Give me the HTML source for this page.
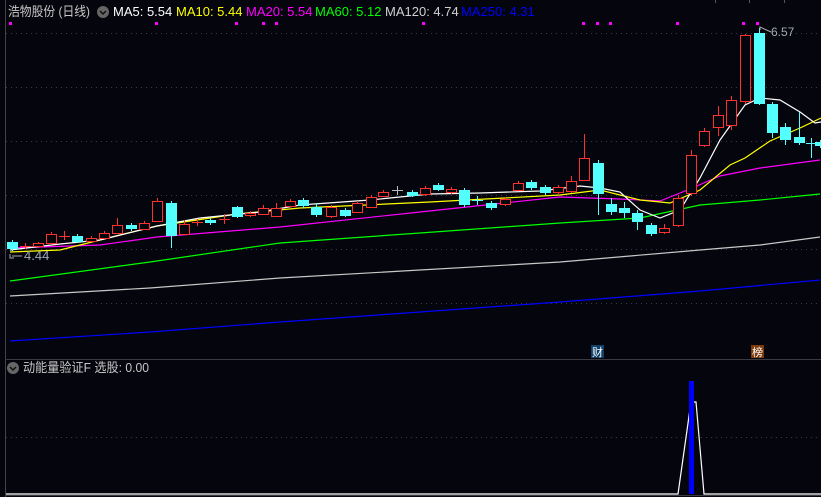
<!DOCTYPE html>
<html><head><meta charset="utf-8"><style>
html,body{margin:0;padding:0;background:#05050d;width:821px;height:497px;overflow:hidden}
svg{display:block}
text{font-family:"Liberation Sans","Noto Sans CJK SC",sans-serif}
</style></head><body>
<svg id="s" width="821" height="497" xmlns="http://www.w3.org/2000/svg">
<rect width="821" height="497" fill="#05050d"/>
<line x1="5.5" y1="0" x2="5.5" y2="497" stroke="#444" stroke-width="1"/>
<g stroke="#3a3a44" stroke-dasharray="1,4" stroke-width="1">
<line x1="6" y1="33.5" x2="821" y2="33.5"/><line x1="6" y1="87.5" x2="821" y2="87.5"/>
<line x1="6" y1="141.5" x2="821" y2="141.5"/><line x1="6" y1="195.5" x2="821" y2="195.5"/>
<line x1="6" y1="249.5" x2="821" y2="249.5"/><line x1="6" y1="303.5" x2="821" y2="303.5"/>
<line x1="6" y1="437.5" x2="821" y2="437.5"/>
</g>
<g stroke="#555" stroke-width="1"><line x1="715.5" y1="0" x2="715.5" y2="3"/><line x1="749.5" y1="0" x2="749.5" y2="3"/><line x1="784.5" y1="0" x2="784.5" y2="3"/></g>
<line x1="5" y1="359.5" x2="821" y2="359.5" stroke="#3a3a40" stroke-width="1"/>
<line x1="5" y1="495.5" x2="821" y2="495.5" stroke="#3a3a40" stroke-width="1"/>
<g fill="#ff00ff">
<rect x="9" y="22" width="3" height="3"/><rect x="155" y="22" width="3" height="3"/><rect x="235" y="22" width="3" height="3"/><rect x="262" y="22" width="3" height="3"/><rect x="275" y="22" width="3" height="3"/><rect x="422" y="22" width="3" height="3"/><rect x="582" y="22" width="3" height="3"/><rect x="596" y="22" width="3" height="3"/><rect x="609" y="22" width="3" height="3"/><rect x="676" y="22" width="3" height="3"/><rect x="742" y="22" width="3" height="3"/><rect x="756" y="22" width="3" height="3"/>
</g>
<g fill="none" stroke-width="1.2">
<polyline stroke="#0000ff" points="10,341 150,332 280,322 420,312 560,302 700,291 820,280"/>
<polyline stroke="#c8c8c8" points="10,296 150,288 280,278 420,270 560,262 700,250 760,245 820,237"/>
<polyline stroke="#00ff00" points="10,281 150,262 280,243 420,233 560,223 640,218 700,205 760,200 820,194"/>
<polyline stroke="#ff00ff" points="10,248 100,245 157,237 280,227 420,212 560,197 620,199 660,201 690,189 720,176 760,168 820,160"/>
<polyline stroke="#ffff00" points="10,252 60,250 120,235 157,226 237,214 300,208 430,202 560,195 600,190 640,200 670,203 700,190 730,165 745,158 770,141 800,128 821,118"/>
<polyline stroke="#ffffff" points="10,250 60,244 100,240 157,226 200,218 260,212 300,205 370,200 430,194 480,193 540,191 580,186 600,188 620,192 640,210 660,218 680,210 700,178 720,140 745,105 760,98 780,100 800,112 815,123 821,122"/>
</g>
<g id="c"></g>
<polyline points="10,254 10,258 14,258" fill="none" stroke="#aaa"/>
<line x1="12" y1="256" x2="22" y2="256" stroke="#aaa"/>
<text x="24" y="260" font-size="13" fill="#a0a8b8">4.44</text>
<polyline points="760,30 760,27 771,32" fill="none" stroke="#aaa"/>
<text x="771" y="36" font-size="12" fill="#a0a8b8">6.57</text>
<rect x="591" y="345" width="13" height="13" fill="#10406a"/>
<text x="592" y="356" font-size="11" fill="#fff">财</text>
<rect x="751" y="345" width="13" height="13" fill="#7a3a0a"/>
<text x="752" y="356" font-size="11" fill="#fff">榜</text>
<polyline points="6,494 678,494 691,402 696,402 704,494 821,494" fill="none" stroke="#fff" stroke-width="1.2"/>
<rect x="689" y="381" width="5" height="113" fill="#0000ff"/>
<text x="8" y="16" font-size="13" fill="#c8c8c8" textLength="82" lengthAdjust="spacingAndGlyphs">浩物股份 (日线)</text>
<circle cx="103" cy="12" r="6" fill="#666"/><polyline points="100,11 103,14 106,11" fill="none" stroke="#111" stroke-width="1.5"/>
<text y="16" font-size="13"><tspan x="113" fill="#fff">MA5: 5.54</tspan><tspan x="176" fill="#ffff00">MA10: 5.44</tspan><tspan x="246" fill="#ff00ff">MA20: 5.54</tspan><tspan x="315" fill="#00ff00">MA60: 5.12</tspan><tspan x="385" fill="#d0d0d0">MA120: 4.74</tspan><tspan x="461" fill="#0000ff">MA250: 4.31</tspan></text>
<circle cx="13" cy="368" r="6" fill="#666"/><polyline points="10,367 13,370 16,367" fill="none" stroke="#111" stroke-width="1.5"/>
<text x="23" y="372" font-size="13" fill="#c8c8c8" textLength="126" lengthAdjust="spacingAndGlyphs">动能量验证F 选股: 0.00</text>
</svg>
<script>
var d=[[12,242,249,240,251,'c'],[25,246,246,243,249,'x'],[38,246,243,242,247,'r'],[51,243,234,232,244,'r'],[64,236,236,231,240,'xr'],[77,236,242,234,243,'c'],[91,241,238,236,242,'r'],[104,238,233,231,239,'r'],[117,233,225,218,234,'r'],[131,225,229,223,231,'c'],[144,229,223,221,230,'r'],[157,221,201,198,222,'r'],[171,203,236,201,248,'c'],[184,234,224,220,235,'r'],[197,222,222,219,226,'xr'],[210,220,223,218,225,'c'],[224,219,219,214,224,'xr'],[237,207,217,206,218,'c'],[250,215,213,211,217,'r'],[263,214,208,205,215,'r'],[276,216,208,203,217,'r'],[290,206,201,199,207,'r'],[303,200,206,198,208,'c'],[316,207,215,203,217,'c'],[331,216,207,205,218,'r'],[345,210,216,208,217,'c'],[357,212,203,201,213,'r'],[371,207,197,195,208,'r'],[383,196,192,190,197,'r'],[397,190,190,186,195,'xg'],[412,192,196,190,197,'c'],[425,194,188,186,196,'r'],[438,185,190,183,191,'c'],[451,192,189,187,194,'r'],[464,190,205,188,207,'c'],[477,200,200,196,205,'xc'],[491,203,208,201,210,'c'],[505,204,199,197,206,'r'],[518,190,183,181,191,'r'],[531,182,188,180,190,'c'],[545,187,193,185,195,'c'],[558,192,187,185,194,'r'],[571,191,181,176,193,'r'],[584,180,158,134,181,'r'],[598,163,194,160,215,'c'],[611,204,212,198,215,'c'],[624,208,213,202,218,'c'],[637,213,222,210,230,'c'],[651,225,234,223,236,'c'],[664,232,228,224,234,'r'],[678,225,198,195,227,'r'],[691,193,155,150,196,'r'],[704,145,131,128,147,'r'],[718,127,115,106,136,'r'],[731,125,100,96,130,'r'],[745,101,35,34,104,'r'],[759,33,104,28,105,'c'],[772,104,133,102,138,'c'],[785,127,140,123,145,'c'],[799,137,143,112,145,'c'],[811,143,143,138,158,'xc'],[820,142,146,140,148,'c']];
var s='';d.forEach(function(a){var x=a[0],o=a[1],c=a[2],h=a[3],l=a[4],t=a[5];
var col=t=='c'||t=='xc'?'#54ffff':t=='xg'?'#bbb':'#ff3030';
s+='<line x1="'+(x+.5)+'" y1="'+h+'" x2="'+(x+.5)+'" y2="'+l+'" stroke="'+col+'"/>';
if(t[0]=='x'){s+='<line x1="'+(x-5)+'" y1="'+(o+.5)+'" x2="'+(x+6)+'" y2="'+(o+.5)+'" stroke="'+col+'"/>';}
else if(t=='c'){var y=Math.min(o,c);s+='<rect x="'+(x-5)+'" y="'+y+'" width="11" height="'+Math.max(2,Math.abs(o-c))+'" fill="'+col+'"/>';}
else{var y=Math.min(o,c);s+='<rect x="'+(x-4.5)+'" y="'+(y+.5)+'" width="10" height="'+Math.max(1,Math.abs(o-c))+'" fill="#05050d" stroke="'+col+'"/>';}});
document.getElementById('c').innerHTML=s;
</script>
</body></html>
